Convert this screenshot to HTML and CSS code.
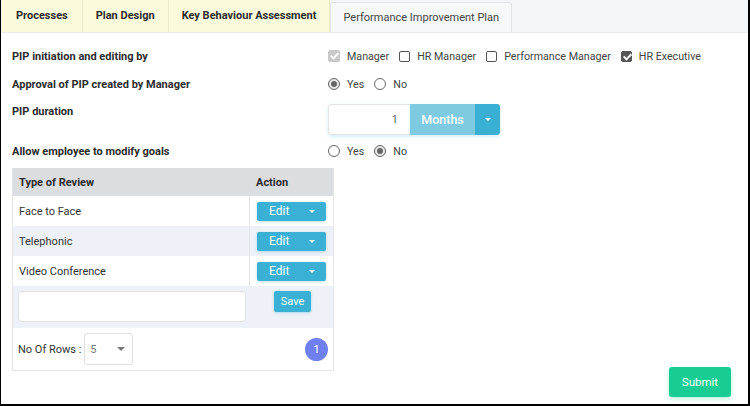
FILE: index.html
```html
<!DOCTYPE html>
<html lang="en">
<head>
    <meta charset="UTF-8">
    <title>Performance Improvement Plan</title>
    <link rel="stylesheet" href="styles.css">
</head>
<body>
    <div class="frame">
        <!-- tabs -->
        <div class="tabs">
            <div class="tab">Processes</div>
            <div class="tab">Plan Design</div>
            <div class="tab">Key Behaviour Assessment</div>
            <div class="tab active">Performance Improvement Plan</div>
        </div>

        <div class="form">
            <div class="form-row">
                <div class="label">PIP initiation and editing by</div>
                <div class="options">
                    <span class="opt"><i class="check disabled"></i>Manager</span>
                    <span class="opt"><i class="check"></i>HR Manager</span>
                    <span class="opt"><i class="check"></i>Performance Manager</span>
                    <span class="opt"><i class="check on"></i>HR Executive</span>
                </div>
            </div>
            <div class="form-row">
                <div class="label">Approval of PIP created by Manager</div>
                <div class="options">
                    <span class="opt"><i class="radio on"></i>Yes</span>
                    <span class="opt"><i class="radio"></i>No</span>
                </div>
            </div>
            <div class="form-row duration">
                <div class="label">PIP duration</div>
                <div class="input-group">
                    <div class="num-input">1</div>
                    <div class="unit-btn">Months</div>
                    <div class="unit-caret"><span class="caret"></span></div>
                </div>
            </div>
            <div class="form-row">
                <div class="label">Allow employee to modify goals</div>
                <div class="options">
                    <span class="opt"><i class="radio"></i>Yes</span>
                    <span class="opt"><i class="radio on"></i>No</span>
                </div>
            </div>

            <div class="bottom">
                <div class="review-table">
                    <div class="tr head">
                        <div class="td">Type of Review</div>
                        <div class="td action">Action</div>
                    </div>
                    <div class="tr">
                        <div class="td">Face to Face</div>
                        <div class="td action"><span class="edit-btn">Edit<span class="caret"></span></span></div>
                    </div>
                    <div class="tr alt">
                        <div class="td">Telephonic</div>
                        <div class="td action"><span class="edit-btn">Edit<span class="caret"></span></span></div>
                    </div>
                    <div class="tr">
                        <div class="td">Video Conference</div>
                        <div class="td action"><span class="edit-btn">Edit<span class="caret"></span></span></div>
                    </div>
                    <div class="add-row">
                        <div class="text-input"></div>
                        <span class="save-btn">Save</span>
                    </div>
                    <div class="pager">
                        <span>No Of Rows :</span>
                        <div class="select">5<span class="caret gray"></span></div>
                        <span class="page">1</span>
                    </div>
                </div>
                <button class="submit">Submit</button>
            </div>
        </div>
    </div>
</body>
</html>
```

FILE: styles.css
```css
* {
    margin: 0;
    padding: 0;
    box-sizing: border-box;
}

body {
    font-family: Roboto, 'Liberation Sans', Arial, sans-serif;
    font-size: 11px;
    color: #333;
    background: #fff;
}

.frame {
    width: 750px;
    height: 406px;
    border-left: 1px solid #000;
    border-right: 2px solid #000;
    border-bottom: 2px solid #000;
    display: flex;
    flex-direction: column;
    overflow: hidden;
}

/* tabs */
.tabs {
    display: flex;
    height: 33px;
    background: #f5f6fa;
    border-bottom: 1px solid #ececef;
    padding-left: 1px;
}

.tab {
    padding: 0 14px;
    line-height: 32px;
    font-weight: 700;
    color: #2b2b2b;
    background: #fbfadb;
    border-right: 1px solid #ecebc9;
    white-space: nowrap;
}

.tab:nth-child(2),
.tab:nth-child(3) {
    padding: 0 13px;
}

.tab.active {
    margin-top: 2px;
    line-height: 30px;
    padding: 0 12px;
    font-weight: 400;
    color: #444;
    background: #f7f8fa;
    border: 1px solid #e4e4e8;
    border-bottom: none;
    border-radius: 3px 3px 0 0;
}

/* form */
.form {
    flex: 1;
    display: flex;
    flex-direction: column;
    padding: 9px 17px 7px 11px;
}

.form-row {
    display: flex;
    align-items: center;
    height: 28px;
}

.label {
    flex: 0 0 316px;
    font-weight: 700;
    color: #2b2b2b;
}

.options {
    display: flex;
    gap: 10px;
    color: #444;
    font-size: 10.7px;
    white-space: nowrap;
}

.opt {
    display: flex;
    align-items: center;
    gap: 7px;
}

.check {
    flex: 0 0 11px;
    height: 11px;
    border: 1px solid #555;
    border-radius: 2px;
    position: relative;
}

.check.on {
    background: #555;
}

.check.disabled {
    flex-basis: 12px;
    height: 12px;
    background: #c9c9c9;
    border-color: #c9c9c9;
}

.check.on::after,
.check.disabled::after {
    content: '';
    position: absolute;
    left: 3px;
    top: 0;
    width: 3px;
    height: 6px;
    border: solid #fff;
    border-width: 0 2px 2px 0;
    transform: rotate(45deg);
}

.radio {
    flex: 0 0 12px;
    height: 12px;
    border: 1px solid #666;
    border-radius: 50%;
    position: relative;
}

.radio.on {
    background: #e8e8e8;
}

.radio.on::after {
    content: '';
    position: absolute;
    left: 2px;
    top: 2px;
    width: 6px;
    height: 6px;
    border-radius: 50%;
    background: #666;
}

.form-row.duration {
    height: 39px;
    align-items: flex-start;
    padding-top: 6px;
}

.duration .label {
    padding-top: 1px;
}

.input-group {
    display: flex;
    height: 31px;
    box-shadow: 0 2px 4px rgba(60, 170, 210, 0.2);
    border-radius: 4px;
}

.num-input {
    width: 82px;
    border: 1px solid #e3e3e6;
    border-right: none;
    border-radius: 4px 0 0 4px;
    text-align: right;
    padding-right: 12px;
    line-height: 29px;
    color: #666;
    background: #fff;
}

.unit-btn {
    width: 65px;
    background: #7ecae1;
    color: #fff;
    font-size: 12.5px;
    font-weight: 500;
    text-align: center;
    line-height: 31px;
}

.unit-caret {
    width: 25px;
    background: #39afd3;
    border-radius: 0 3px 3px 0;
    display: flex;
    align-items: center;
    justify-content: center;
}

.caret {
    display: inline-block;
    width: 0;
    height: 0;
    border-left: 3px solid transparent;
    border-right: 3px solid transparent;
    border-top: 3px solid #fff;
}

.caret.gray {
    border-left-width: 4px;
    border-right-width: 4px;
    border-top: 4px solid #777;
}

/* table + submit */
.bottom {
    flex: 1;
    display: flex;
    justify-content: space-between;
    margin-top: 3px;
}

.review-table {
    width: 322px;
    align-self: flex-start;
    border: 1px solid #e6e6e9;
    border-top: none;
}

.tr {
    display: flex;
    height: 30px;
    align-items: stretch;
}

.tr.head {
    height: 28px;
    background: #dcdde1;
    font-weight: 700;
    color: #2b2b2b;
}

.tr.alt {
    background: #eef1f8;
}

.td {
    flex: 1;
    display: flex;
    align-items: center;
    padding-left: 6px;
}

.td.action {
    flex: 0 0 84px;
    border-left: 1px solid #e6e6e9;
    padding-left: 7px;
}

.head .td.action {
    border-left: none;
}

.edit-btn {
    width: 69px;
    height: 19px;
    background: #3ab0d5;
    color: #fff;
    border-radius: 2px;
    display: flex;
    align-items: center;
    justify-content: space-between;
    padding: 0 11px 0 12px;
    font-size: 12px;
    box-shadow: 0 1px 3px rgba(58, 176, 213, 0.35);
}

.add-row {
    display: flex;
    align-items: flex-start;
    height: 42px;
    background: #eef1f8;
    padding: 5px 0 0 5px;
}

.text-input {
    width: 228px;
    height: 31px;
    background: #fff;
    border: 1px solid #e3e3e6;
    border-radius: 4px;
}

.save-btn {
    margin-left: 28px;
    width: 37px;
    height: 21px;
    line-height: 21px;
    text-align: center;
    background: #3ab0d5;
    color: #fff;
    border-radius: 2px;
    box-shadow: 0 1px 3px rgba(58, 176, 213, 0.35);
}

.pager {
    display: flex;
    align-items: center;
    height: 42px;
    padding: 0 5px 0 5px;
    color: #333;
}

.select {
    margin-left: 3px;
    width: 49px;
    height: 32px;
    border: 1px solid #e0e0e3;
    border-radius: 3px;
    display: flex;
    align-items: center;
    justify-content: space-between;
    padding: 0 7px 0 5px;
    color: #777;
}

.page {
    margin-left: auto;
    width: 23px;
    height: 23px;
    border-radius: 50%;
    background: #6f7ff0;
    color: #fff;
    text-align: center;
    line-height: 23px;
}

.submit {
    align-self: flex-end;
    width: 62px;
    height: 30px;
    border: none;
    border-radius: 3px;
    background: #17cd94;
    color: #fff;
    font-family: inherit;
    font-size: 11.5px;
    box-shadow: 0 2px 4px rgba(23, 205, 148, 0.3);
}
```
